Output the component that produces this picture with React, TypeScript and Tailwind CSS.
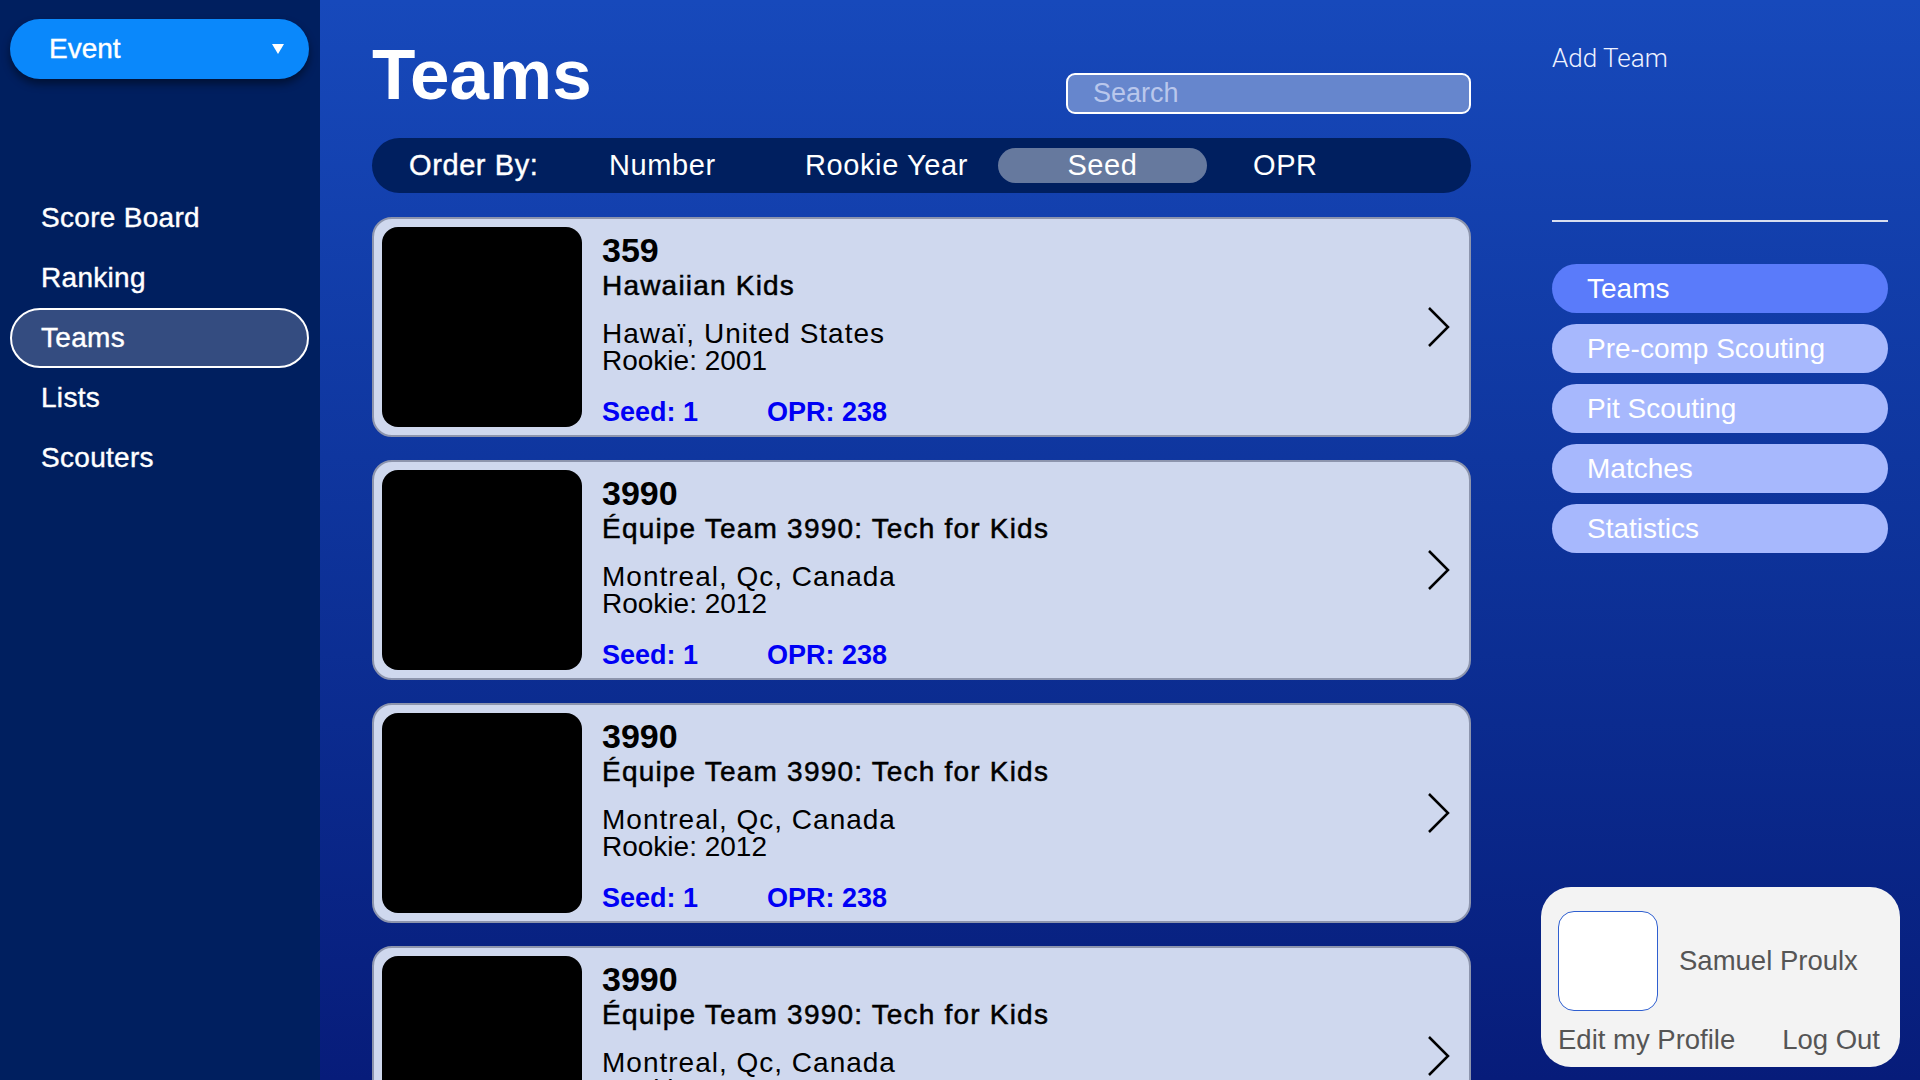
type Team = {
  number: string
  name: string
  location: string
  rookie: number
  seed: number
  opr: number
}

const teams: Team[] = [
  { number: "359", name: "Hawaiian Kids", location: "Hawaï, United States", rookie: 2001, seed: 1, opr: 238 },
  { number: "3990", name: "Équipe Team 3990: Tech for Kids", location: "Montreal, Qc, Canada", rookie: 2012, seed: 1, opr: 238 },
  { number: "3990", name: "Équipe Team 3990: Tech for Kids", location: "Montreal, Qc, Canada", rookie: 2012, seed: 1, opr: 238 },
  { number: "3990", name: "Équipe Team 3990: Tech for Kids", location: "Montreal, Qc, Canada", rookie: 2012, seed: 1, opr: 238 },
]

const sideLinks = ["Score Board", "Ranking", "Teams", "Lists", "Scouters"]
const sections = ["Teams", "Pre-comp Scouting", "Pit Scouting", "Matches", "Statistics"]

const Sidebar = () => (
  <aside className="w-[320px] shrink-0 bg-[#001f5f] pl-[10px] pr-[11px] pt-[19px]">
    <button className="flex h-[60px] w-full items-center justify-between rounded-full bg-[#0a88fb] pl-[39px] pr-[25px] text-[28px] leading-[60px] text-white shadow-[0_5px_8px_rgba(0,0,0,0.45)] [-webkit-text-stroke:0.4px_white]">
      <span>Event</span>
      <svg width="12" height="10" viewBox="0 0 12 10">
        <polygon points="0,0 12,0 6,10" fill="white" />
      </svg>
    </button>

    <nav className="mt-[109px] flex flex-col">
      {sideLinks.map((link) => (
        <a
          key={link}
          className={
            link === "Teams"
              ? "h-[60px] rounded-full border-2 border-white bg-[#344c80] pl-[29px] text-[28px] leading-[56px] tracking-[0.3px] [-webkit-text-stroke:0.4px_white]"
              : "h-[60px] rounded-full border-2 border-transparent pl-[29px] text-[28px] leading-[56px] tracking-[0.3px] [-webkit-text-stroke:0.4px_white]"
          }
        >
          {link}
        </a>
      ))}
    </nav>
  </aside>
)

const TeamCard = ({ team }: { team: Team }) => (
  <div className="flex h-[220px] shrink-0 items-start rounded-[20px] border-2 border-[#8d95ad] bg-[#cfd8ee] p-[8px] text-black">
    <div className="size-[200px] shrink-0 rounded-[16px] bg-black" />
    <div className="ml-[20px] flex flex-col pt-[5px]">
      <span className="text-[34px] font-bold leading-[36px]">{team.number}</span>
      <span className="text-[28px] leading-[36px] tracking-[1.2px] [-webkit-text-stroke:0.5px_black]">{team.name}</span>
      <span className="mt-[16px] text-[28px] leading-[27px] tracking-[1px]">{team.location}</span>
      <span className="text-[28px] leading-[27px]">Rookie: {team.rookie}</span>
      <div className="mt-[23px] flex text-[27px] font-bold leading-[30px] text-[#0000f5]">
        <span className="w-[165px]">Seed: {team.seed}</span>
        <span>OPR: {team.opr}</span>
      </div>
    </div>
    <svg className="ml-auto mr-[11px] self-center" width="24" height="42" viewBox="0 0 24 42">
      <path d="M3 2 L22 21 L3 40" fill="none" stroke="black" strokeWidth="2.5" />
    </svg>
  </div>
)

const OrderBar = () => (
  <div className="mt-[24px] flex h-[55px] items-center rounded-full bg-[#001f5f] pl-[37px] text-[29px] tracking-[0.6px]">
    <span className="w-[200px] [-webkit-text-stroke:0.4px_white]">Order By:</span>
    <span className="w-[196px]">Number</span>
    <span className="w-[193px]">Rookie Year</span>
    <span className="flex h-[35px] w-[209px] items-center justify-center rounded-full bg-[#66799e]">Seed</span>
    <span className="ml-[46px]">OPR</span>
  </div>
)

const Profile = () => (
  <div className="mt-auto mb-[13px] -ml-[11px] w-[359px] rounded-[30px] bg-[#f3f3f3] px-[17px] pt-[24px] pb-[12px] text-[27.5px] text-[#555555]">
    <div className="flex items-center">
      <div className="size-[100px] rounded-[16px] border border-[#2f5fd0] bg-white" />
      <span className="ml-[21px]">Samuel Proulx</span>
    </div>
    <div className="mt-[14px] flex justify-between pr-[3px] leading-[30px]">
      <span>Edit my Profile</span>
      <span>Log Out</span>
    </div>
  </div>
)

export default function App() {
  return (
    <div className="flex h-[1080px] w-[1920px] overflow-hidden font-['Liberation_Sans',Arial,sans-serif] text-white">
      <Sidebar />
      <div className="flex flex-1 bg-linear-to-b from-[#1749bb] to-[#071c7a]">
        <main className="ml-[52px] w-[1099px] shrink-0 pt-[40px]">
          <div className="flex items-start justify-between">
            <h1 className="text-[71px] font-bold leading-[70px]">Teams</h1>
            <div className="mt-[33px] flex h-[41px] w-[405px] items-center rounded-[9px] border-2 border-white bg-[#6686cd] pl-[25px] text-[27px] text-[#b9c7ec]">
              Search
            </div>
          </div>
          <OrderBar />
          <div className="mt-[24px] flex flex-col gap-[23px]">
            {teams.map((team, i) => (
              <TeamCard key={i} team={team} />
            ))}
          </div>
        </main>

        <section className="ml-[81px] flex w-[336px] shrink-0 flex-col pt-[43px]">
          <span className="font-['Roboto',sans-serif] text-[26px] font-light leading-[30px] text-[#eef2ff]">Add Team</span>
          <div className="mt-[147px] h-[2px] bg-[#d8def0]" />
          <div className="mt-[42px] flex flex-col gap-[11px]">
            {sections.map((s) => (
              <a
                key={s}
                className={
                  s === "Teams"
                    ? "h-[49px] rounded-full bg-[#5a7bfa] pl-[35px] text-[28px] leading-[49px]"
                    : "h-[49px] rounded-full bg-[#a7b8fd] pl-[35px] text-[28px] leading-[49px]"
                }
              >
                {s}
              </a>
            ))}
          </div>
          <Profile />
        </section>
      </div>
    </div>
  )
}
